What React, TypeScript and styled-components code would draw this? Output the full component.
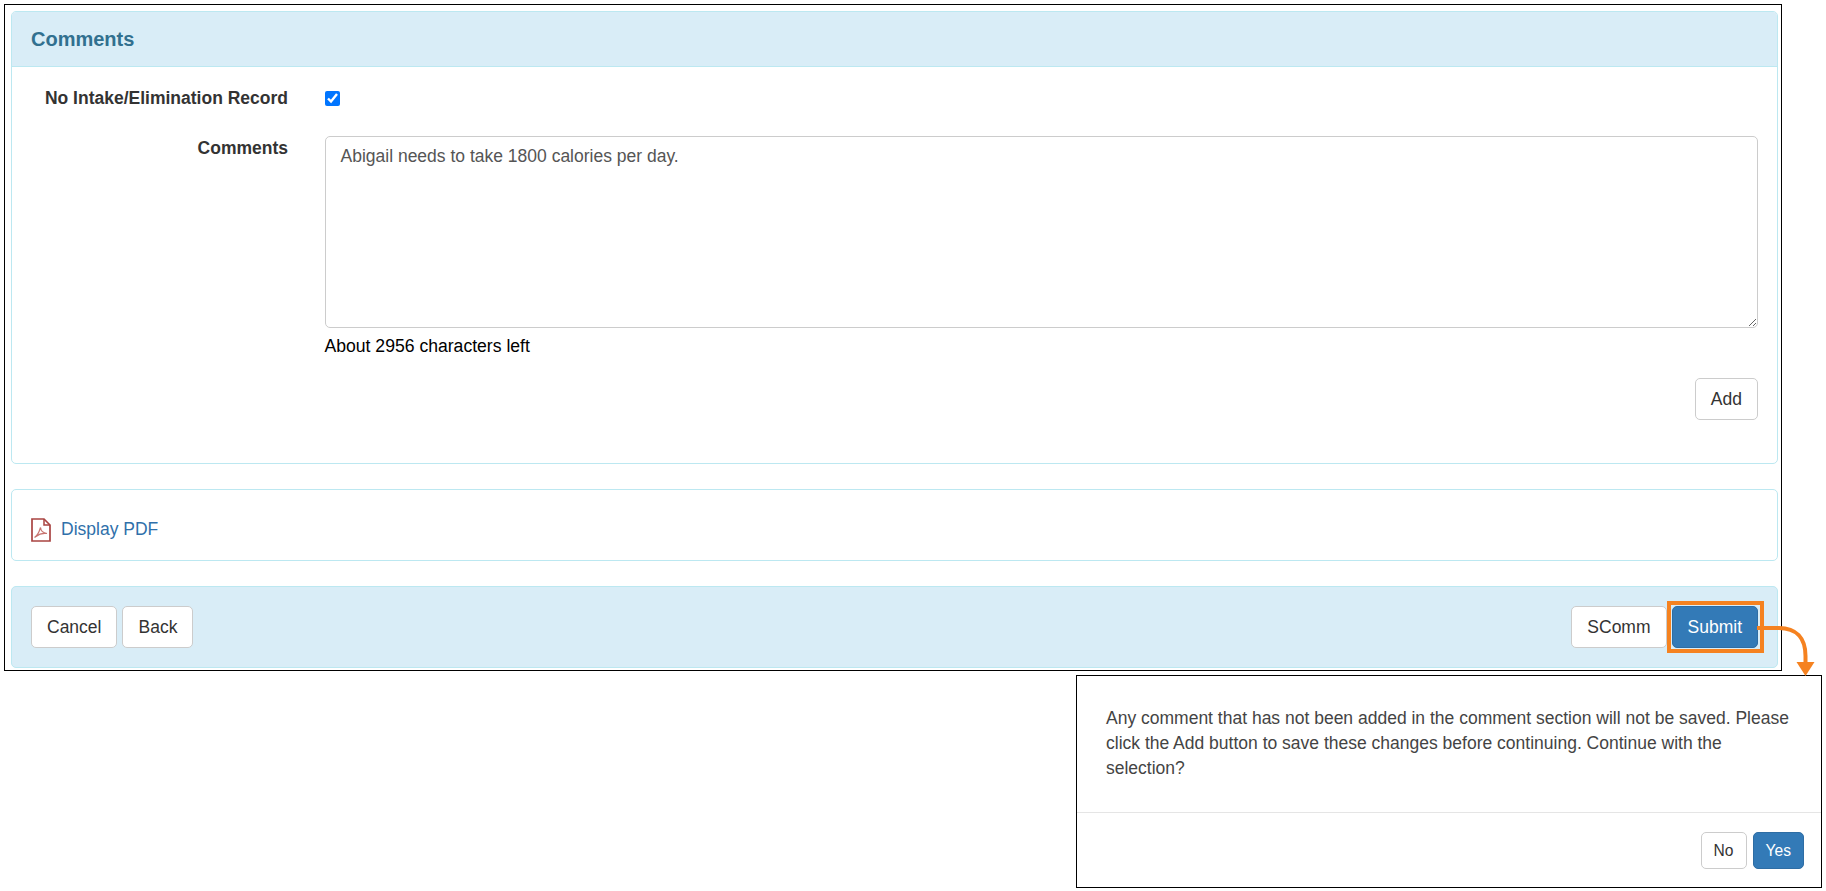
import React from "react";
import styled, { createGlobalStyle } from "styled-components";

const Global = createGlobalStyle`
  html, body { margin: 0; padding: 0; background: #fff; }
  body { font-family: "Liberation Sans", Arial, sans-serif; color: #333; }
`;

const Page = styled.div`
  width: 1826px;
  height: 891px;
  padding: 4px 0 0 4px;
  box-sizing: border-box;
  overflow: hidden;
`;

const Frame = styled.div`
  width: 1778px;
  height: 667px;
  box-sizing: border-box;
  border: 1px solid #000;
  padding: 6px 3px 0 6px;
  display: flex;
  flex-direction: column;
`;

const Panel = styled.section<{ $tint?: boolean; $h: number; $gap?: number }>`
  box-sizing: border-box;
  height: ${(p) => p.$h}px;
  margin-top: ${(p) => p.$gap ?? 0}px;
  border: 1px solid #bce8f1;
  border-radius: 5px;
  background: ${(p) => (p.$tint ? "#d9edf7" : "#fff")};
  flex: none;
`;

const PanelHeader = styled.header`
  height: 55px;
  box-sizing: border-box;
  background: #d9edf7;
  border-bottom: 1px solid #bce8f1;
  border-radius: 4px 4px 0 0;
  padding: 0 19px;
  display: flex;
  align-items: center;
  font-size: 20px;
  font-weight: 700;
  color: #31708f;
`;

const FormRow = styled.div<{ $top: number }>`
  display: grid;
  grid-template-columns: 276px 1fr;
  column-gap: 36.5px;
  padding: ${(p) => p.$top}px 19px 0 0;
`;

const Label = styled.label<{ $offset: number }>`
  text-align: right;
  font-size: 17.5px;
  font-weight: 700;
  line-height: 20px;
  color: #333;
  padding-top: ${(p) => p.$offset}px;
`;

const Check = styled.input`
  width: 15px;
  height: 15px;
  margin: 3.5px 0 0;
  display: block;
  accent-color: #0075ff;
`;

const Field = styled.div`
  display: flex;
  flex-direction: column;
  align-items: stretch;
`;

const TextArea = styled.textarea`
  box-sizing: border-box;
  height: 192px;
  width: 100%;
  margin: 0;
  padding: 8px 15px;
  border: 1px solid #ccc;
  border-radius: 5px;
  font: 17.5px/22px "Liberation Sans", Arial, sans-serif;
  color: #555;
  outline: none;
  display: block;
`;

const Hint = styled.div`
  font-size: 17.6px;
  line-height: 20px;
  color: #000;
  margin-top: 8px;
`;

const AddRow = styled.div`
  display: flex;
  justify-content: flex-end;
  margin-top: 22px;
`;

const Button = styled.button<{ $primary?: boolean }>`
  box-sizing: border-box;
  height: 42px;
  padding: 0 15px;
  border: 1px solid ${(p) => (p.$primary ? "#2e6da4" : "#ccc")};
  border-radius: 5px;
  background: ${(p) => (p.$primary ? "#337ab7" : "#fff")};
  color: ${(p) => (p.$primary ? "#fff" : "#333")};
  font: 17.5px "Liberation Sans", Arial, sans-serif;
  white-space: nowrap;
`;

const PdfRow = styled.div`
  height: 100%;
  box-sizing: border-box;
  padding: 9px 0 0 19px;
  display: flex;
  align-items: center;
  gap: 10px;
`;

const PdfLink = styled.a`
  font-size: 17.5px;
  color: #2f70aa;
  text-decoration: none;
`;

const Footer = styled.div`
  height: 100%;
  box-sizing: border-box;
  padding: 0 19px 0 19px;
  display: flex;
  align-items: center;
  justify-content: space-between;
`;

const ButtonGroup = styled.div`
  display: flex;
  gap: 5px;
  align-items: center;
`;

const SubmitWrap = styled.div`
  position: relative;
  display: flex;
`;

const Highlight = styled.div`
  position: absolute;
  left: -5px;
  top: -5px;
  right: -6px;
  bottom: -5px;
  border: 4px solid #f58220;
  pointer-events: none;
`;

const Callout = styled.svg`
  position: absolute;
  left: 90px;
  top: 0;
  width: 56px;
  height: 76px;
  overflow: visible;
  z-index: 2;
`;

const Dialog = styled.div`
  box-sizing: border-box;
  width: 746px;
  height: 213px;
  margin: 4px 0 0 1072px;
  border: 1px solid #000;
  display: flex;
  flex-direction: column;
`;

const DialogBody = styled.div`
  height: 137px;
  box-sizing: border-box;
  padding: 30px 25px 0 29px;
  font-size: 17.5px;
  line-height: 25px;
  color: #444;
  border-bottom: 1px solid #e5e5e5;
`;

const DialogFooter = styled.div`
  flex: 1;
  display: flex;
  justify-content: flex-end;
  gap: 6px;
  padding: 19px 17px 0 0;
`;

const SmallButton = styled(Button)`
  height: 37px;
  padding: 0 12px;
  font-size: 15.6px;
`;

const PdfIcon = () => (
  <svg width="20" height="24" viewBox="0 0 20 24" fill="none">
    <path d="M1 1H13L19 7V23H1Z" stroke="#a94442" strokeWidth="1.7" />
    <path d="M13 1V7H19" stroke="#a94442" strokeWidth="1.5" />
    <path
      d="M3.5 19.5C6 18 8.5 13 9.5 9.5C9.8 12.5 12 15 16 15.5C13 15 8 16 5 18.5"
      stroke="#c77470"
      strokeWidth="1.2"
    />
  </svg>
);

export default function App() {
  return (
    <Page>
      <Global />
      <Frame>
        <Panel $h={453}>
          <PanelHeader>Comments</PanelHeader>
          <FormRow $top={20}>
            <Label $offset={1}>No Intake/Elimination Record</Label>
            <Check type="checkbox" defaultChecked />
          </FormRow>
          <FormRow $top={28}>
            <Label $offset={2}>Comments</Label>
            <Field>
              <TextArea defaultValue="Abigail needs to take 1800 calories per day." />
              <Hint>About 2956 characters left</Hint>
              <AddRow>
                <Button>Add</Button>
              </AddRow>
            </Field>
          </FormRow>
        </Panel>
        <Panel $h={72} $gap={25}>
          <PdfRow>
            <PdfIcon />
            <PdfLink href="#">Display PDF</PdfLink>
          </PdfRow>
        </Panel>
        <Panel $tint $h={82} $gap={25}>
          <Footer>
            <ButtonGroup>
              <Button>Cancel</Button>
              <Button>Back</Button>
            </ButtonGroup>
            <ButtonGroup>
              <Button>SComm</Button>
              <SubmitWrap>
                <Button $primary>Submit</Button>
                <Highlight />
                <Callout viewBox="0 0 56 76" fill="none">
                  <path d="M-5 22H17C34 22 43.5 32 43.5 50V58" stroke="#f58220" strokeWidth="4" />
                  <path d="M34.5 56H52.5L43.5 70Z" fill="#f58220" />
                </Callout>
              </SubmitWrap>
            </ButtonGroup>
          </Footer>
        </Panel>
      </Frame>
      <Dialog>
        <DialogBody>
          Any comment that has not been added in the comment section will not be saved. Please click the Add button to
          save these changes before continuing. Continue with the selection?
        </DialogBody>
        <DialogFooter>
          <SmallButton>No</SmallButton>
          <SmallButton $primary>Yes</SmallButton>
        </DialogFooter>
      </Dialog>
    </Page>
  );
}
